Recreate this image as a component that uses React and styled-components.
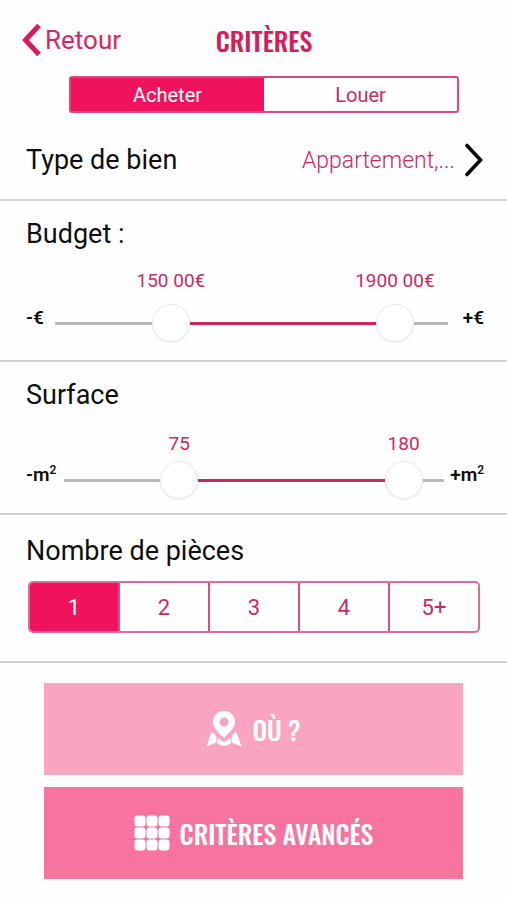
import React, { useState } from 'react'
import styled, { createGlobalStyle } from 'styled-components'

const PIECES = ['1', '2', '3', '4', '5+']
const THUMB = 38

// the budget slider is logarithmic, from 5 000 to 280 000
const toBudget = (pos) => {
    const value = Math.round((5000 * Math.pow(56, pos / 1000)) / 5000) * 5000
    const digits = String(value)
    return `${digits.slice(0, -2)} ${digits.slice(-2)}€`
}

const thumbCenter = (value, min, max) => {
    const ratio = (value - min) / (max - min)
    return `calc(${THUMB / 2}px + (100% - ${THUMB}px) * ${ratio})`
}

function RangeSlider({ name, min, max, initial, format, before, after, columns, dense }) {
    const [low, setLow] = useState(initial[0])
    const [high, setHigh] = useState(initial[1])
    const start = thumbCenter(low, min, max)
    const end = thumbCenter(high, min, max)

    return (
        <SliderGrid $columns={columns} $dense={dense}>
            <Values>
                <Value style={{ left: start }}>{format(low)}</Value>
                <Value style={{ left: end }}>{format(high)}</Value>
            </Values>
            <Unit>{before}</Unit>
            <Track>
                <Line
                    style={{
                        background: `linear-gradient(to right, #b9b9b9 ${start}, #c92a5e ${start}, #c92a5e ${end}, #b9b9b9 ${end})`
                    }}
                />
                <Range
                    type="range"
                    aria-label={`${name} minimum`}
                    min={min}
                    max={max}
                    value={low}
                    onChange={(e) => setLow(Math.min(Number(e.target.value), high))}
                />
                <Range
                    type="range"
                    aria-label={`${name} maximum`}
                    min={min}
                    max={max}
                    value={high}
                    onChange={(e) => setHigh(Math.max(Number(e.target.value), low))}
                />
            </Track>
            <Unit $end>{after}</Unit>
        </SliderGrid>
    )
}

function App() {
    const [mode, setMode] = useState('Acheter')
    const [pieces, setPieces] = useState('1')

    return (
        <Page>
            <GlobalStyle />
            <Header>
                <Back type="button">
                    <svg width="20" height="34" viewBox="0 0 20 34" fill="none" stroke="#d81b5c" strokeWidth="5">
                        <path d="M18 2.500L4.500 17L18 31.500" />
                    </svg>
                    Retour
                </Back>
                <Title>CRITÈRES</Title>
            </Header>

            <Tabs>
                {['Acheter', 'Louer'].map(item =>
                    <Tab key={item} type="button" aria-pressed={mode === item} $active={mode === item} onClick={() => setMode(item)}>
                        {item}
                    </Tab>
                )}
            </Tabs>

            <TypeRow type="button">
                <TypeLabel>Type de bien</TypeLabel>
                <TypeValue>Appartement,...</TypeValue>
                <svg width="20" height="34" viewBox="0 0 20 34" fill="none" stroke="#0a0a0a" strokeWidth="3.600" strokeLinecap="round">
                    <path d="M3 2.500L16.500 17L3 31.500" />
                </svg>
            </TypeRow>

            <Section>
                <Heading>Budget :</Heading>
                <RangeSlider
                    name="Budget"
                    min={0}
                    max={1000}
                    initial={[273, 904]}
                    format={toBudget}
                    before="-€"
                    after="+€"
                    columns="29px 1fr 36px"
                />
            </Section>

            <Section>
                <Heading>Surface</Heading>
                <RangeSlider
                    name="Surface"
                    min={30}
                    max={190}
                    initial={[75, 180]}
                    format={(value) => value}
                    before={<>-m<sup>2</sup></>}
                    after={<>+m<sup>2</sup></>}
                    columns="38px 1fr 40px"
                    dense
                />
            </Section>

            <Section $roomy>
                <Heading>Nombre de pièces</Heading>
                <Rooms>
                    {PIECES.map(item =>
                        <Room key={item} type="button" aria-pressed={pieces === item} $active={pieces === item} onClick={() => setPieces(item)}>
                            {item}
                        </Room>
                    )}
                </Rooms>
            </Section>

            <Actions>
                <Action type="button" $color="#faa4bf">
                    <svg width="36" height="36" viewBox="0 0 36 36" fill="#fff">
                        <path fillRule="evenodd" d="M18 0C11.800 0 7 4.800 7 10.800C7 17.500 12.500 21.500 18 27C23.500 21.500 29 17.500 29 10.800C29 4.800 24.200 0 18 0ZM18 6.500A4.500 4.500 0 1 1 18 15.500A4.500 4.500 0 1 1 18 6.500Z" />
                        <path d="M6.500 21L10.300 25V31.500L.5 35.500L4.800 23Q5.300 21.500 6.500 21Z" />
                        <path d="M29.500 21L25.700 25V31.500L35.500 35.500L31.200 23Q30.700 21.500 29.500 21Z" />
                        <path d="M11.300 27L18 31L24.700 27V32.300Q21.500 35 18 35Q14.500 35 11.300 32.300Z" />
                    </svg>
                    OÙ ?
                </Action>
                <Action type="button" $color="#f7749e">
                    <svg width="36" height="36" viewBox="0 0 36 36" fill="#fff">
                        {[0.5, 12.5, 24.5].map(y =>
                            [0.5, 12.5, 24.5].map(x =>
                                <rect key={`${x}-${y}`} x={x} y={y} width="11" height="11" rx="3" />
                            )
                        )}
                    </svg>
                    CRITÈRES AVANCÉS
                </Action>
            </Actions>
        </Page>
    )
}

export default App

const GlobalStyle = createGlobalStyle`
body{
    margin:0;
    background-color:#fefefe;
}
*{
    box-sizing:border-box;
}
button{
    font-family:inherit;
    border:none;
    background:none;
    padding:0;
    cursor:pointer;
}
svg{
    flex-shrink:0;
}
`
const Page = styled.main`
font-family:Roboto, "Liberation Sans", sans-serif;
color:#0f0f0f;
padding-bottom:20px;
`
const Header = styled.header`
display:grid;
grid-template-columns:1fr auto 1fr;
align-items:center;
height:76px;
padding:4px 0 0 21px;
`
const Back = styled.button`
display:flex;
align-items:center;
gap:4px;
color:#d02a60;
font-size:26px;
`
const Title = styled.h1`
margin:0;
color:#d3205b;
font-family:Oswald, "Roboto Condensed", "Liberation Sans Narrow", "Liberation Sans", sans-serif;
font-size:26px;
font-weight:500;
`
const Tabs = styled.div`
display:flex;
height:37px;
margin:0 48px 0 69px;
border:2px solid #dc4a78;
border-radius:3px;
`
const Tab = styled.button`
flex:1;
font-size:20px;
color:${props => props.$active ? '#fff' : '#c92a5e'};
background-color:${props => props.$active ? '#ef125c' : 'transparent'};
`
const TypeRow = styled.button`
display:flex;
align-items:center;
width:100%;
height:88px;
padding:8px 23px 0 26px;
border-bottom:2px solid #d2d2d2;
color:inherit;
`
const TypeLabel = styled.span`
flex:1;
text-align:left;
font-size:27px;
`
const TypeValue = styled.span`
margin-right:9px;
font-size:23px;
font-weight:300;
color:#c92a5e;
`
const Section = styled.section`
border-bottom:2px solid #d2d2d2;
padding-top:${props => props.$roomy ? 20 : 17}px;
`
const Heading = styled.h2`
margin:0 26px;
font-size:27px;
font-weight:400;
line-height:32px;
`
const SliderGrid = styled.div`
display:grid;
grid-template-columns:${props => props.$columns};
row-gap:${props => props.$dense ? 4 : 10}px;
padding:${props => props.$dense ? 20 : 18}px 23px ${props => props.$dense ? 14 : 18}px 26px;
`
const Values = styled.div`
grid-column:2;
position:relative;
height:26px;
`
const Value = styled.output`
position:absolute;
transform:translateX(-50%);
white-space:nowrap;
font-size:19px;
line-height:26px;
color:#c92a5e;
`
const Unit = styled.span`
grid-row:2;
font-size:19px;
font-weight:600;
line-height:28px;
text-align:${props => props.$end ? 'right' : 'left'};

sup{
    font-size:12px;
    line-height:0;
}
`
const Track = styled.div`
grid-row:2;
grid-column:2;
display:grid;
align-items:center;
height:38px;
`
const Line = styled.div`
grid-area:1 / 1;
height:3px;
`
const Range = styled.input`
grid-area:1 / 1;
appearance:none;
width:100%;
height:38px;
margin:0;
background:transparent;
pointer-events:none;

&::-webkit-slider-thumb {
  appearance:none;
  width:38px;
  height:38px;
  border:1px solid #e9e9e9;
  border-radius:50%;
  background-color:#fff;
  box-shadow:0 1px 2px rgba(0, 0, 0, 0.08);
  pointer-events:auto;
  cursor:pointer;
}
`
const Rooms = styled.div`
display:flex;
height:52px;
margin:14px 27px 28px 28px;
border:2px solid #dd6c90;
border-radius:5px;
overflow:hidden;
`
const Room = styled.button`
flex:1;
font-size:22px;
color:${props => props.$active ? '#fff' : '#c92a5e'};
background-color:${props => props.$active ? '#ef125c' : 'transparent'};
& + &{
    border-left:2px solid #d5527d;
}
`
const Actions = styled.div`
display:flex;
flex-direction:column;
gap:12px;
padding:20px 44px 0;
`
const Action = styled.button`
display:flex;
align-items:center;
justify-content:center;
gap:10px;
height:92px;
background-color:${props => props.$color};
color:#fff;
font-family:Oswald, "Roboto Condensed", "Liberation Sans Narrow", "Liberation Sans", sans-serif;
font-size:26px;
font-weight:500;
`
